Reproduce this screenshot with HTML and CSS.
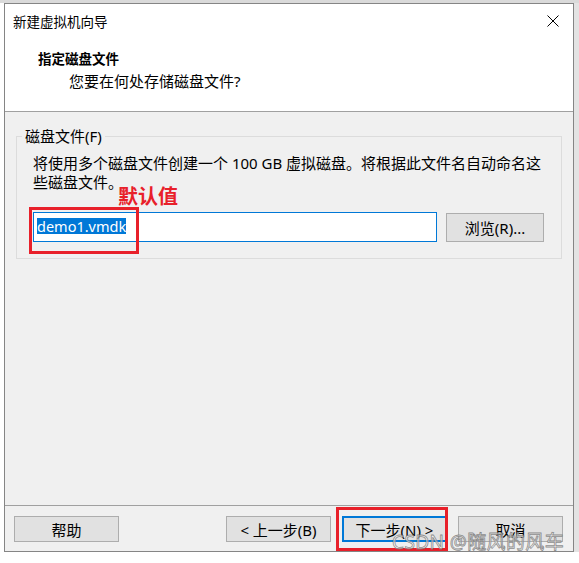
FILE: index.html
```html
<!DOCTYPE html>
<html lang="zh">
<head>
  <meta charset="UTF-8" />
  <title>新建虚拟机向导</title>
  <link rel="stylesheet" href="styles.css">
</head>
<body>
  <div class="desk">
    <div class="topstrip"></div>
    <div class="row">
      <div class="dialog">
        <div class="titlebar">
          <span class="title">新建虚拟机向导</span>
          <svg class="close" width="12" height="12" viewBox="0 0 12 12">
            <path d="M0.5 0.5 L11.5 11.5 M11.5 0.5 L0.5 11.5" stroke="#000" stroke-width="1" fill="none" />
          </svg>
        </div>

        <div class="header">
          <div class="heading">指定磁盘文件</div>
          <div class="subheading">您要在何处存储磁盘文件?</div>
        </div>

        <div class="content">
          <fieldset class="group">
            <legend>磁盘文件(F)</legend>
            <p class="desc">将使用多个磁盘文件创建一个 100 GB 虚拟磁盘。将根据此文件名自动命名这<br>些磁盘文件。</p>
            <div class="file-row">
              <div class="file-input"><span class="selected">demo1.vmdk</span></div>
              <button class="btn browse">浏览(R)...</button>
            </div>
          </fieldset>
        </div>

        <div class="footer">
          <button class="btn help">帮助</button>
          <button class="btn back">&lt; 上一步(B)</button>
          <button class="btn next">下一步(N) &gt;</button>
          <button class="btn cancel">取消</button>
        </div>

        <!-- 标注 -->
        <span class="note">默认值</span>
        <div class="mark mark-input"></div>
        <div class="mark mark-next"></div>
        <span class="watermark">CSDN @随风的风车</span>
      </div>
      <div class="sidestrip"></div>
    </div>
  </div>
</body>
</html>
```

FILE: styles.css
```css
body {
  margin: 0;
  background: #fff;
  font-family: 'Noto Sans', 'Noto Sans CJK SC', sans-serif;
  font-size: 15px;
  color: #000;
}

.desk {
  width: 579px;
  height: 563px;
  overflow: hidden;
}

.topstrip {
  height: 3px;
  background: #dadada;
}

.row {
  display: flex;
  padding-left: 4px;
}

.dialog {
  position: relative;
  width: 570px;
  height: 549px;
  box-sizing: border-box;
  border: 1px solid #858585;
  background: #f0f0f0;
  display: flex;
  flex-direction: column;
}

.sidestrip {
  width: 5px;
  height: 549px;
  background: #e3e3e3;
}

.titlebar {
  height: 36px;
  flex: none;
  background: #fff;
  display: flex;
  align-items: center;
  justify-content: space-between;
  padding: 0 14px 0 8px;
}

.title {
  font-size: 13.5px;
  line-height: 36px;
}

.close {
  display: block;
  margin-top: -2px;
}

.header {
  height: 72px;
  flex: none;
  box-sizing: border-box;
  background: #fff;
  border-bottom: 1px solid #a0a0a0;
  padding: 9px 0 0 33px;
}

.heading {
  font-size: 13.5px;
  font-weight: 700;
  line-height: 20px;
}

.subheading {
  line-height: 20px;
  margin-top: 2px;
  padding-left: 31px;
}

.content {
  height: 394px;
  flex: none;
  box-sizing: border-box;
  border-bottom: 1px solid #a0a0a0;
  padding: 0 11px;
}

.group {
  margin: 15px 0 0;
  padding: 9px 16px 16px;
  border: 1px solid #dcdcdc;
}

.group legend {
  margin-left: -11px;
  padding: 0 3px;
  line-height: 18px;
}

.desc {
  margin: 0;
  line-height: 19px;
  white-space: nowrap;
}

.file-row {
  display: flex;
  gap: 9px;
  margin-top: 20px;
}

.file-input {
  width: 404px;
  height: 30px;
  box-sizing: border-box;
  border: 1px solid #0078d7;
  background: #fff;
  padding: 3px 0 0 3px;
}

.selected {
  display: inline-block;
  background: #0078d7;
  color: #fff;
  line-height: 16px;
  font-size: 14.5px;
}

.btn {
  font-family: inherit;
  font-size: 15px;
  background: #e1e1e1;
  border: 1px solid #adadad;
  padding: 0;
  color: #000;
}

.browse {
  width: 98px;
  height: 29px;
  margin-top: 1px;
}

.footer {
  flex: 1;
  display: flex;
  align-items: flex-start;
  padding: 10px 10px 0 9px;
}

.footer .btn {
  width: 105px;
  height: 26px;
}

.back {
  margin-left: auto;
}

.next {
  margin-left: 11px;
  border: 2px solid #0078d7;
}

.cancel {
  margin-left: 11px;
}

.note {
  position: absolute;
  left: 113px;
  top: 181px;
  font-size: 20px;
  line-height: 24px;
  font-weight: 700;
  color: #e8202a;
}

.mark {
  position: absolute;
  box-sizing: border-box;
  border: 3px solid #e8202a;
}

.mark-input {
  left: 24px;
  top: 203px;
  width: 110px;
  height: 47px;
}

.mark-next {
  left: 331px;
  top: 503px;
  width: 112px;
  height: 44px;
}

.watermark {
  position: absolute;
  left: 387px;
  top: 527px;
  font-size: 19px;
  line-height: 22px;
  letter-spacing: 0.4px;
  color: rgba(255, 255, 255, 0.6);
  -webkit-text-stroke: 0.8px rgba(120, 120, 120, 0.85);
  white-space: nowrap;
}
```
